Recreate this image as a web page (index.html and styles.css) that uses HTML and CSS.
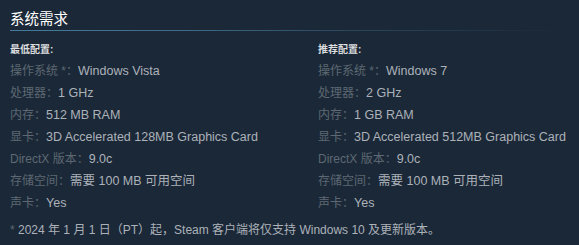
FILE: index.html
```html
<!DOCTYPE html>
<html lang="zh-CN">
<head>
<meta charset="utf-8">
<link rel="stylesheet" href="styles.css">
</head>
<body>
<div class="sysreq">
  <h2 class="title">系统需求</h2>
  <div class="cols">
    <div class="col">
      <div class="head">最低配置:</div>
      <ul class="list">
        <li><span class="lbl">操作系统 *：</span>Windows Vista</li>
        <li><span class="lbl">处理器：</span>1 GHz</li>
        <li><span class="lbl">内存：</span>512 MB RAM</li>
        <li><span class="lbl">显卡：</span>3D Accelerated 128MB Graphics Card</li>
        <li><span class="lbl">DirectX 版本：</span>9.0c</li>
        <li><span class="lbl">存储空间：</span>需要 100 MB 可用空间</li>
        <li><span class="lbl">声卡：</span>Yes</li>
      </ul>
    </div>
    <div class="col">
      <div class="head">推荐配置:</div>
      <ul class="list">
        <li><span class="lbl">操作系统 *：</span>Windows 7</li>
        <li><span class="lbl">处理器：</span>2 GHz</li>
        <li><span class="lbl">内存：</span>1 GB RAM</li>
        <li><span class="lbl">显卡：</span>3D Accelerated 512MB Graphics Card</li>
        <li><span class="lbl">DirectX 版本：</span>9.0c</li>
        <li><span class="lbl">存储空间：</span>需要 100 MB 可用空间</li>
        <li><span class="lbl">声卡：</span>Yes</li>
      </ul>
    </div>
  </div>
  <p class="note"><span class="star">*</span> 2024 年 1 月 1 日（PT）起，Steam 客户端将仅支持 Windows 10 及更新版本。</p>
</div>
</body>
</html>
```

FILE: styles.css
```css
html, body {
  margin: 0;
  padding: 0;
  background: #1b2838;
}
body {
  font-family: "Liberation Sans", "Noto Sans CJK SC", sans-serif;
  font-size: 12.5px;
  color: #acb2b8;
}
.sysreq {
  padding: 0 0 0 10px;
}
.title {
  margin: 0;
  padding-top: 8px;
  height: 22px;
  box-sizing: content-box;
  font-size: 14.5px;
  line-height: 22px;
  font-weight: normal;
  color: #ffffff;
  border-bottom: 1px solid transparent;
  border-image: linear-gradient(to right, #46799a 0%, #3e6c8a 30%, rgba(62,108,138,0.45) 60%, rgba(62,108,138,0) 97%) 1;
}
.cols {
  display: grid;
  grid-template-columns: 308px 1fr;
  padding-top: 9px;
}
.head {
  font-size: 10px;
  line-height: 20px;
  font-weight: bold;
  color: #dcdedf;
}
.list {
  list-style: none;
  margin: 0;
  padding: 0;
}
.list li {
  line-height: 22px;
  white-space: nowrap;
}
.lbl {
  font-size: 12px;
  color: #5d6872;
}
.note {
  margin: 5px 0 0;
  font-size: 12px;
  line-height: 22px;
}
.star {
  color: #5d6872;
}
```
